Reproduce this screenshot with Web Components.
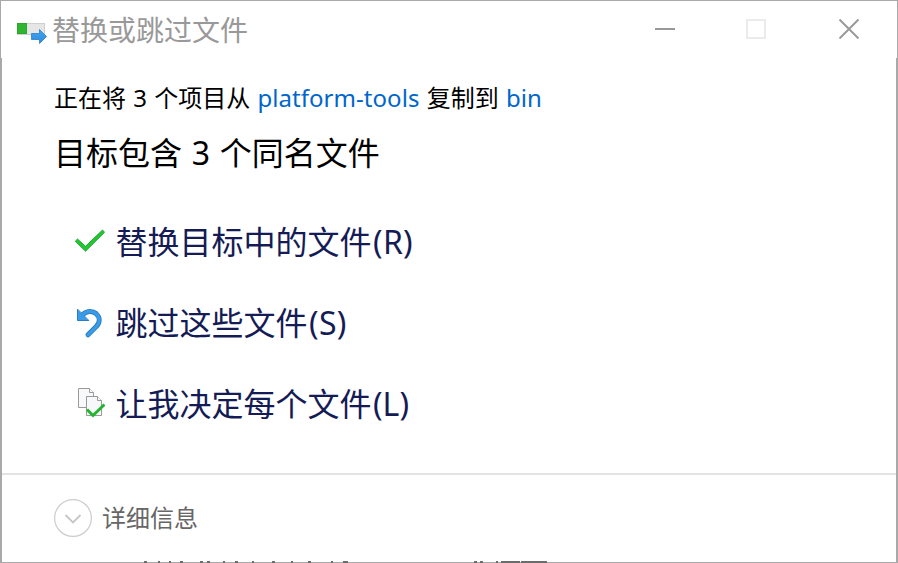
<!DOCTYPE html>
<html lang="zh-CN">
<head>
<meta charset="utf-8">
<title>替换或跳过文件</title>
<style>
html,body{margin:0;height:100%;overflow:hidden;background:#fff}
body{font-family:"Noto Sans","Noto Sans CJK SC",sans-serif}
</style>
</head>
<body>
<copy-dialog>
  <title-bar slot="title">替换或跳过文件</title-bar>
  <copy-summary slot="summary"></copy-summary>
  <command-link icon="check" style="--ls:.3px">替换目标中的文件<span>(R)</span></command-link>
  <command-link icon="undo" style="--ls:.3px">跳过这些文件<span>(S)</span></command-link>
  <command-link icon="pages" style="--ls:0px">让我决定每个文件<span>(L)</span></command-link>
  <details-bar slot="footer">详细信息</details-bar>
</copy-dialog>
<script>
const define = (name, html) => customElements.define(name, class extends HTMLElement {
  constructor() {
    super();
    this.attachShadow({mode: 'open'}).innerHTML = typeof html === 'function' ? html(this) : html;
  }
});

define('title-bar', `
<style>
:host{display:flex;align-items:center;height:55px;padding:0 37px 0 15px;box-sizing:border-box;color:#999;font-size:28px}
.icon{width:31px;height:24px;margin-top:8px;flex:none}
.text{margin-left:5px;flex:1;line-height:40px;white-space:nowrap;padding-top:2px}
.buttons{display:flex;gap:71px;align-items:center}
.buttons svg{display:block}
.buttons svg:last-child{margin-left:1px}
</style>
<svg class="icon" viewBox="0 0 31 24">
  <defs><linearGradient id="a" x2="0" y2="1"><stop stop-color="#45a5ee"/><stop offset="1" stop-color="#2d8ade"/></linearGradient></defs>
  <rect x="1.5" y="2.5" width="27" height="11" fill="#e6e6e6" stroke="#d0d0d0"/>
  <rect x="1.5" y="2.5" width="9" height="10" fill="#2fb52f" stroke="#2ca52e"/>
  <path d="M15.5 12.500H23.500V8.500L30.500 15.500L23.500 22.500V18.500H15.500Z" fill="url(#a)" stroke="#2a7fc9" stroke-width=".8"/>
</svg>
<span class="text"><slot></slot></span>
<div class="buttons">
  <svg width="20" height="20"><path d="M0 10H20" stroke="#999" stroke-width="2"/></svg>
  <svg width="20" height="20"><path d="M1 1H19V19H1Z" fill="none" stroke="#ebebeb" stroke-width="2"/></svg>
  <svg width="22" height="20"><path d="M1.500 .5L20.500 19.500M20.500 .5L1.500 19.500" stroke="#999" stroke-width="2"/></svg>
</div>`);

define('copy-summary', `
<style>
:host{display:block;padding:20px 0 0 52px;color:#000}
p,h1{margin:0;font-weight:400;white-space:pre}
p{font-size:24px;line-height:40px;word-spacing:1px}
h1{font-size:32px;line-height:52px;margin-top:9px;word-spacing:1.4px}
a{color:#0066cc}
.src{letter-spacing:.05px}
</style>
<p>正在将 3 个项目从 <a class="src">platform-tools</a> 复制到 <a>bin</a></p>
<h1>目标包含 3 个同名文件</h1>`);

const icons = {
  check: `<path d="M2.300 15.200L4.500 13L12.500 20.300L29.500 4L31.600 6.300L12.500 25.300Z" fill="#1fc92d" stroke="#22a038" stroke-width=".9"/>`,
  undo: `<g fill="none" stroke-linecap="round">
      <path d="M9.500 7.800C13.500 3.500 19.500 3.500 23 6.500C27.300 10.500 27 15.500 23.500 19.300L15 27.800" stroke="#2b7dc0" stroke-width="5"/>
      <path d="M4.500 2.500V13.500H15.500Z" fill="#3a9be8" stroke="#2b7dc0" stroke-linejoin="miter"/>
      <path d="M9.500 7.800C13.500 3.500 19.500 3.500 23 6.500C27.300 10.500 27 15.500 23.500 19.300L15 27.800" stroke="#3a9be8" stroke-width="3.200"/>
    </g>`,
  pages: `<path d="M5.500 .5H16.500L20.500 4.500V19.500H5.500Z" fill="#f8f9fa" stroke="#999"/>
    <path d="M16.500 .5V4.500H20.500" fill="#fff" stroke="#999"/>
    <path d="M13.500 8.500H24.500L28.500 12.500V27.500H13.500Z" fill="#f6f8fa" stroke="#999"/>
    <path d="M24.500 8.500V12.500H28.500" fill="#fff" stroke="#999"/>
    <path d="M14 21.500L20 27.500L31.500 16.500" fill="none" stroke="#23b52f" stroke-width="3"/>`
};
define('command-link', el => `
<style>
:host{display:flex;align-items:center;height:81px;padding-left:71px;font-size:32px;color:#151c55}
svg{flex:none}
.label{margin-left:10.500px;line-height:48px;white-space:nowrap}
::slotted(span){letter-spacing:var(--ls,0);margin-left:1.500px}
</style>
<svg width="32" height="32" viewBox="0 0 32 32">${icons[el.getAttribute('icon')]}</svg>
<span class="label"><slot></slot></span>`);

define('details-bar', `
<style>
:host{display:flex;align-items:center;box-sizing:border-box;height:88px;border-top:2px solid #e3e3e3;padding-left:52px;font-size:24px;color:#666}
svg{flex:none}
.label{margin-left:10px;line-height:36px}
</style>
<svg width="38" height="38"><circle cx="19" cy="19" r="18.400" fill="none" stroke="#ccc" stroke-width="1.200"/><path d="M11.500 16L19 23.500L26.500 16" fill="none" stroke="#c6c6c6" stroke-width="1.800"/></svg>
<span class="label"><slot></slot></span>`);

define('window-remnant', () => {
  const marks = [[144,3],[158,2],[169,2],[180,3],[200,3],[207,3],[223,2],[235,3],[252,2],[272,3],[291,2],[308,3],[331,2],[343,5],[474,3],[480,3],[496,2],[501,19],[521,26]];
  return `<style>:host{display:block;height:2px}svg{display:block}</style>
  <svg width="898" height="2">${marks.map(([x, w]) => `<rect x="${x}" width="${w}" height="2" fill="#6c6c6c"/>`).join('')}</svg>`;
});

define('copy-dialog', `
<style>
:host{display:flex;flex-direction:column;box-sizing:border-box;width:898px;height:563px;border-top:1px solid #a9a9a9;background:#fff;position:relative}
.head{border:solid #a9a9a9;border-width:0 1px;height:57px;flex:none}
.body{flex:1;border:solid #a9a9a9;border-width:0 2px;min-height:0}
.commands{padding-top:22px;height:272px}
.edge{height:1px;background:#a9a9a9;flex:none}
window-remnant{position:absolute;left:0;bottom:0}
</style>
<div class="head"><slot name="title"></slot></div>
<div class="body"><slot name="summary"></slot><div class="commands"><slot></slot></div>
<slot name="footer"></slot></div>
<div class="edge"></div>
<window-remnant></window-remnant>`);
</script>
</body>
</html>
